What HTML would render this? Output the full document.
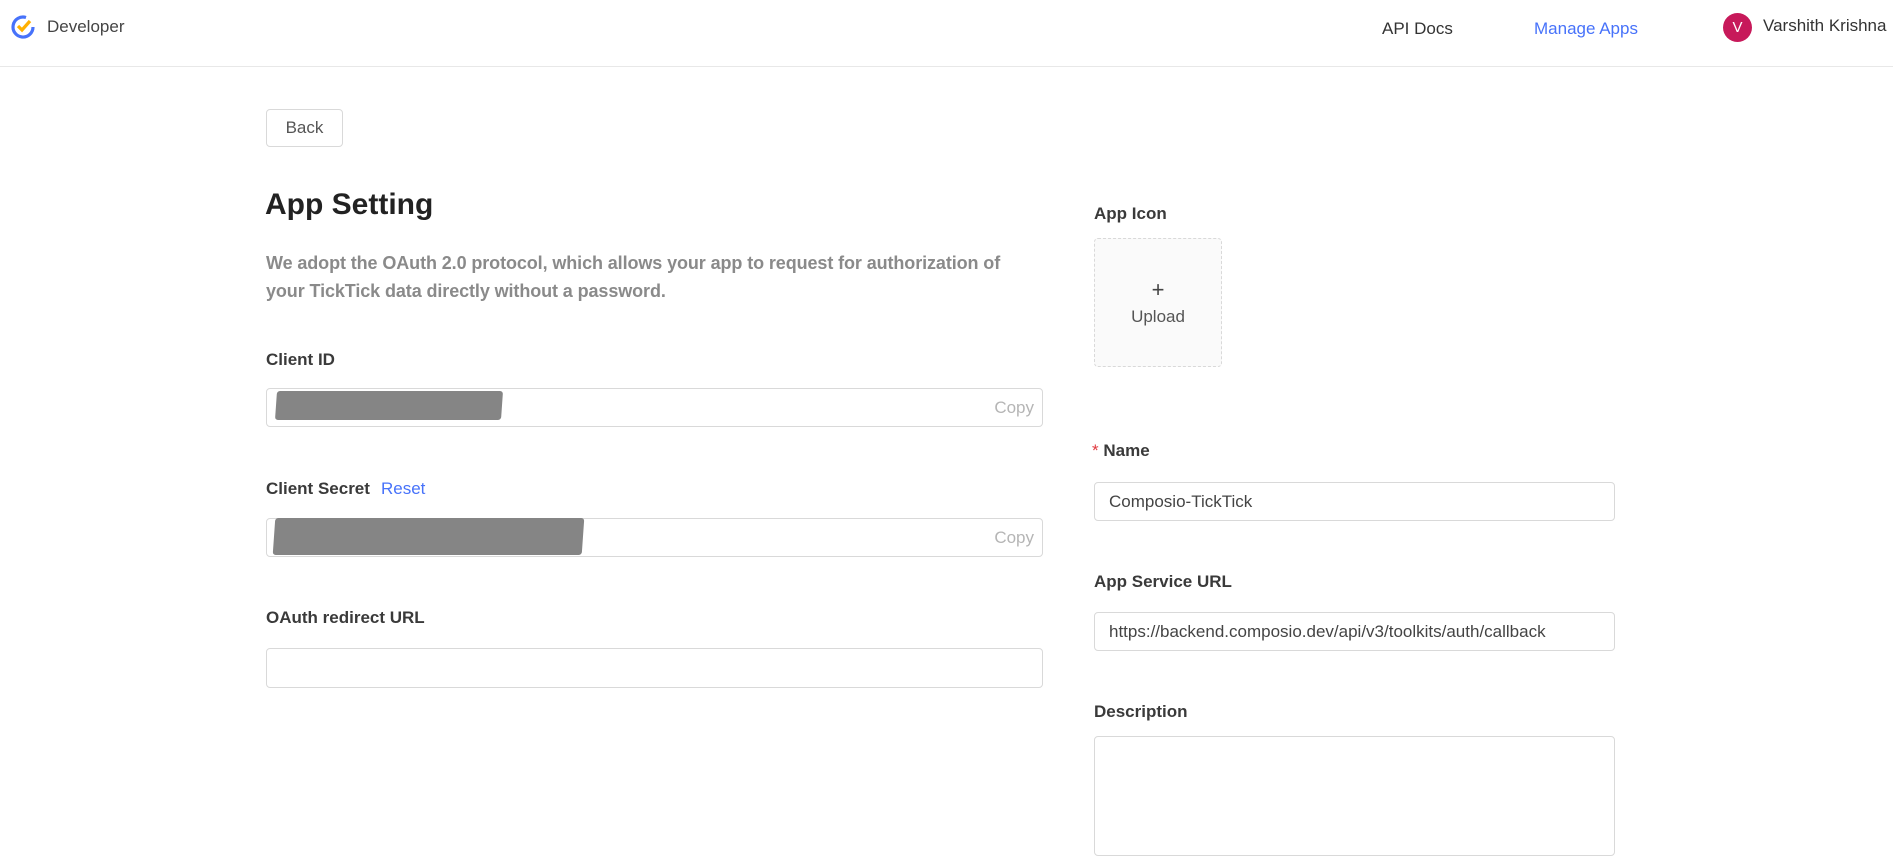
<!DOCTYPE html>
<html><head><meta charset="utf-8"><style>
*{box-sizing:border-box;margin:0;padding:0}
body{width:1893px;height:835px;overflow:hidden;background:#fff;font-family:"Liberation Sans",sans-serif;color:#333;position:relative}
.a{position:absolute;white-space:nowrap}
.hdr{position:absolute;left:0;top:0;width:1893px;height:67px;border-bottom:1px solid #e8e8e8}
.lbl{font-size:17px;color:#3a3a3a;font-weight:bold}
.inp{position:absolute;border:1px solid #d9d9d9;border-radius:4px;background:#fff}
.copy{position:absolute;right:8px;top:50%;transform:translateY(-50%);color:#b5b5b5;font-size:17px}
.val{position:absolute;left:14px;top:50%;transform:translateY(-50%);font-size:17px;color:#444;white-space:nowrap}
.scr{position:absolute;background:#858585}
</style></head><body>
<div class="hdr"></div>
<svg class="a" style="left:9px;top:13px" width="28" height="28" viewBox="0 0 28 28">
<path d="M24 14 A10 10 0 1 1 17 4.5" fill="none" stroke="#4772fa" stroke-width="3.2"/>
<path d="M9 13 L13 17 L21 8" fill="none" stroke="#ffb000" stroke-width="3.2"/>
</svg>
<div class="a" style="left:47px;top:17px;font-size:17px;color:#444">Developer</div>
<div class="a" style="left:1382px;top:19px;font-size:17px;color:#333">API Docs</div>
<div class="a" style="left:1534px;top:19px;font-size:17px;color:#4772fa">Manage Apps</div>
<div class="a" style="left:1723px;top:13px;width:29px;height:29px;border-radius:50%;background:#c7195a;color:#fff;font-size:15px;text-align:center;line-height:29px">V</div>
<div class="a" style="left:1763px;top:16px;font-size:17px;color:#333">Varshith Krishna</div>

<div class="a" style="left:266px;top:109px;width:77px;height:38px;border:1px solid #d9d9d9;border-radius:4px;font-size:17px;color:#555;text-align:center;line-height:36px">Back</div>

<div class="a" style="left:265px;top:188px;font-size:30px;font-weight:bold;color:#222">App Setting</div>
<div class="a" style="left:266px;top:249px;font-size:18px;font-weight:bold;color:#8a8a8a;line-height:28px;white-space:normal;width:760px;letter-spacing:-0.1px">We adopt the OAuth 2.0 protocol, which allows your app to request for authorization of your TickTick data directly without a password.</div>

<div class="a lbl" style="left:266px;top:350px">Client ID</div>
<div class="inp" style="left:266px;top:388px;width:777px;height:39px"><span class="copy">Copy</span></div>
<div class="scr" style="left:276px;top:391px;width:226px;height:29px;border-radius:3px;transform:skewX(-4deg)"></div>

<div class="a lbl" style="left:266px;top:479px">Client Secret</div>
<div class="a" style="left:381px;top:479px;font-size:17px;color:#4772fa">Reset</div>
<div class="inp" style="left:266px;top:518px;width:777px;height:39px"><span class="copy">Copy</span></div>
<div class="scr" style="left:274px;top:518px;width:309px;height:37px;border-radius:3px;transform:skewX(-4deg)"></div>

<div class="a lbl" style="left:266px;top:608px">OAuth redirect URL</div>
<div class="inp" style="left:266px;top:648px;width:777px;height:40px"></div>

<div class="a lbl" style="left:1094px;top:204px">App Icon</div>
<div class="a" style="left:1094px;top:238px;width:128px;height:129px;border:1px dashed #d9d9d9;border-radius:4px;background:#fafafa"></div>
<div class="a" style="left:1094px;top:277px;width:128px;text-align:center;font-size:22px;color:#444">+</div>
<div class="a" style="left:1094px;top:307px;width:128px;text-align:center;font-size:17px;color:#555">Upload</div>

<div class="a lbl" style="left:1092px;top:441px"><span style="color:#e0383e;font-weight:normal">*</span> Name</div>
<div class="inp" style="left:1094px;top:482px;width:521px;height:39px"><span class="val">Composio-TickTick</span></div>

<div class="a lbl" style="left:1094px;top:572px">App Service URL</div>
<div class="inp" style="left:1094px;top:612px;width:521px;height:39px"><span class="val">https://backend.composio.dev/api/v3/toolkits/auth/callback</span></div>

<div class="a lbl" style="left:1094px;top:702px">Description</div>
<div class="inp" style="left:1094px;top:736px;width:521px;height:120px"></div>
</body></html>
